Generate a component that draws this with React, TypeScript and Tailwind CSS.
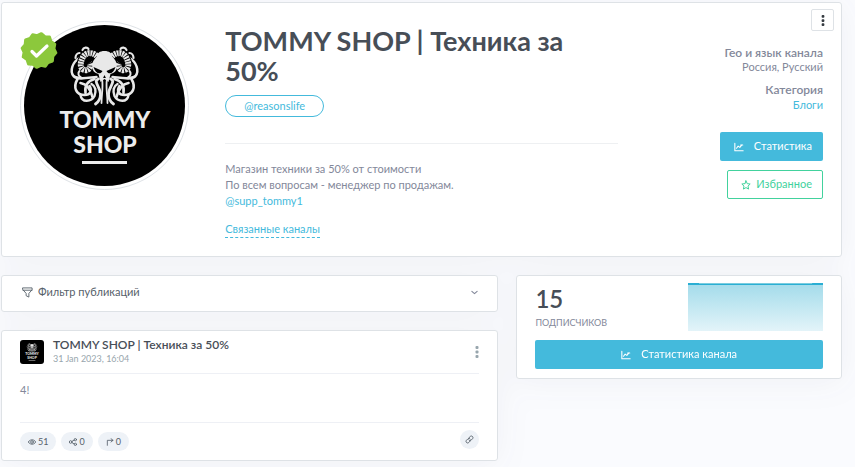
import type { ReactNode } from "react";

function OctopusHalf() {
  return (
    <g fill="none" stroke="#e8e8e8" strokeLinecap="round">
      <path d="M-25 -17 C-32 -13 -35 -4 -31 1 C-27 5 -18 3 -8 2" strokeWidth="2.5" />
      <path d="M-6 -17 C-10 -23 -19 -24 -22 -17 C-25 -11 -24 -6 -20 -5 C-15 -4 -13 -9 -15 -12" stroke="#000" strokeWidth="8" strokeLinecap="butt" />
      <path d="M-6 -17 C-10 -23 -19 -24 -22 -17 C-25 -11 -24 -6 -20 -5 C-15 -4 -13 -9 -15 -12" strokeWidth="6" strokeLinecap="butt" strokeDasharray="1.9 0.7" />
      <path d="M-22 -25 C-21 -28 -17 -28 -16 -26" strokeWidth="2.2" />
      <path d="M-29 -17 C-29 -20 -27 -22 -25 -22" strokeWidth="2.2" />
      <path d="M-25 -4 C-27 -2 -26 1 -24 2" strokeWidth="2" />
      <path d="M-10 4 C-17 6 -20 11 -19 18" strokeWidth="2.6" />
      <path d="M-24 8 C-18 9 -14 14 -12 22" strokeWidth="2.6" />
      <path d="M-27 4 C-32 13 -28 20 -20 20 C-14 20 -12 16 -15 11" strokeWidth="2.6" />
      <path d="M-24 20 C-23 28 -13 27 -10 21 C-8 16 -9 11 -13 9" strokeWidth="2.4" />
      <path d="M-6 4 C-12 6 -4 12 -4 19 C-4 24 -6 27 -9 29" strokeWidth="2.8" />
      <path d="M-2.500 4 C-1 12 -3 20 -3 28" strokeWidth="1.8" />
    </g>
  );
}

function ShopLogo({ className }: { className: string }) {
  return (
    <svg viewBox="0 0 161 161" className={className} role="img" aria-label="TOMMY SHOP">
      <rect width="161" height="161" fill="#000" />
      <g transform="translate(80.5 50)">
        <OctopusHalf />
        <g transform="scale(-1 1)">
          <OctopusHalf />
        </g>
        <path d="M0 -24 C5 -24 7 -22 8 -18 C11 -15 13 -12 12 -7 C12 -4 10 -2 6 -1 L4 7 L0 4 L-4 7 L-6 -1 C-10 -2 -12 -4 -12 -7 C-13 -12 -11 -15 -8 -18 C-7 -22 -5 -24 0 -24Z" fill="#e8e8e8" />
        <path d="M-11 -8 L-2 -4 C-4 0 -9 -1 -11 -8Z M11 -8 L2 -4 C4 0 9 -1 11 -8Z M0 0 L1.4 3 L-1.4 3Z" fill="#000" />
      </g>
      <g fill="#ececec" fontFamily="Lato, sans-serif" fontWeight="900" fontSize="23" textAnchor="middle">
        <text x="81" y="103">TOMMY</text>
        <text x="81" y="128">SHOP</text>
      </g>
      <rect x="58" y="136" width="45" height="3" fill="#ececec" />
    </svg>
  );
}

function VerifiedBadge() {
  const points = Array.from({ length: 24 }, (_, i) => {
    const r = i % 2 === 0 ? 17 : 15;
    const a = ((i * 15 - 82) * Math.PI) / 180;
    return `${(19 + r * Math.cos(a)).toFixed(2)},${(18.5 + r * Math.sin(a)).toFixed(2)}`;
  }).join(" ");
  return (
    <svg viewBox="0 0 38 37" className="absolute left-0 top-[11px] h-[37px] w-[38px]" role="img" aria-label="Verified">
      <polygon points={points} fill="#8cc83c" stroke="#8cc83c" strokeWidth="3" strokeLinejoin="round" />
      <path d="M12 19.500 L16.500 24 L27 14" fill="none" stroke="#fff" strokeWidth="3.200" strokeLinecap="round" strokeLinejoin="round" />
    </svg>
  );
}

function Icon({ className = "size-3", width = 2, children }: { className?: string; width?: number; children: ReactNode }) {
  return (
    <svg viewBox="0 0 24 24" className={className} fill="none" stroke="currentColor" strokeWidth={width} strokeLinecap="round" strokeLinejoin="round" aria-hidden="true">
      {children}
    </svg>
  );
}

function ChartIcon() {
  return (
    <Icon className="size-2.5" width={2.600}>
      <path d="M2 3v18h20M6 15l4-5 4 3 5-6M16 7h5" />
    </Icon>
  );
}

function Dots({ className }: { className: string }) {
  return (
    <svg viewBox="0 0 4 12" className={className} fill="currentColor" aria-hidden="true">
      <rect x="0.500" y="0" width="3" height="3" rx="1" />
      <rect x="0.500" y="4.500" width="3" height="3" rx="1" />
      <rect x="0.500" y="9" width="3" height="3" rx="1" />
    </svg>
  );
}

function Card({ className, children }: { className: string; children: ReactNode }) {
  return (
    <section className={`rounded-[3px] border border-[#dee2e6] bg-white ${className}`}>
      {children}
    </section>
  );
}

function Pill({ label, value, children }: { label: string; value: string; children: ReactNode }) {
  return (
    <span title={label} className="flex h-[19px] items-center gap-0.5 rounded-full bg-[#eef2f7] px-2 text-[9px] text-[#56606a]">
      {children}
      {value}
    </span>
  );
}

function ChannelHeader() {
  return (
    <Card className="relative grid grid-cols-12 gap-x-[18px] p-[18px]">
      <div className="relative col-span-3">
        <div className="size-[169px] rounded-full border border-[#dee2e6] bg-white p-[3px]">
          <ShopLogo className="size-full rounded-full" />
        </div>
        <VerifiedBadge />
      </div>

      <div className="col-span-6 pt-[5px]">
        <h1 className="text-[27px] font-bold leading-[30px] text-[#474e57]">TOMMY SHOP | Техника за 50%</h1>
        <a href="#channel" className="mt-[9px] inline-flex h-[22px] items-center rounded-full border border-[#44badc] px-[18px] text-[#44badc]">
          @reasonslife
        </a>
        <hr className="mt-[26px] border-[#eef0f2]" />
        <p className="mt-[17px] leading-4">
          Магазин техники за 50% от стоимости
          <br />
          По всем вопросам - менеджер по продажам.
          <br />
          <a href="#support" className="text-[#44badc]">@supp_tommy1</a>
        </p>
        <a href="#related" className="mt-3 inline-block border-b border-dashed border-[#44badc] leading-4 text-[#44badc]">
          Связанные каналы
        </a>
      </div>

      <div className="col-span-3 flex flex-col items-end pt-[25px] text-right">
        <h2 className="text-[12px] font-semibold leading-[14px]">Гео и язык канала</h2>
        <p className="leading-[14px]">Россия, Русский</p>
        <h2 className="mt-[9px] text-[12px] font-semibold leading-[14px]">Категория</h2>
        <a href="#blogs" className="leading-4 text-[#44badc]">Блоги</a>
        <a href="#stats" className="mt-[19px] flex h-[29px] items-center gap-2.5 rounded-[2px] bg-[#44badc] pl-[14px] pr-[11px] text-white">
          <ChartIcon />
          Статистика
        </a>
        <button type="button" className="mt-[9px] flex h-[29px] items-center gap-[5px] rounded-[2px] border border-[#42d29d] pl-[13px] pr-[10px] text-[#42d29d]">
          <Icon className="size-2.5" width={2.400}>
            <path d="M12 2l3 6.800 7 .8-5.200 5 1.400 7.200-6.200-3.600-6.200 3.600 1.400-7.200L2 9.600l7-.8z" />
          </Icon>
          Избранное
        </button>
      </div>

      <button type="button" aria-label="Меню канала" className="absolute right-[7px] top-1.5 flex h-[22px] w-[23px] items-center justify-center rounded-[2px] border border-[#dee2e6] bg-white text-[#343a40]">
        <Dots className="h-[11px] w-1" />
      </button>
    </Card>
  );
}

function PostFilter() {
  return (
    <Card className="text-[#56606a]">
      <button type="button" className="flex h-[35px] w-full items-center gap-[5px] pb-0.5 pl-5 pr-[18px]">
        <Icon className="size-[11px]">
          <path d="M2 2h20v4l-7 8v8l-6-3v-5L2 6zM2 7h20" />
        </Icon>
        Фильтр публикаций
        <Icon className="ml-auto size-[9px] text-[#83889a]" width={3}>
          <path d="M5 9l7 6 7-6" />
        </Icon>
      </button>
    </Card>
  );
}

function Post() {
  return (
    <Card className="px-[18px] pb-[9px] pt-[7px]">
      <header className="flex items-center border-b border-[#eef0f5] pb-[7px]">
        <ShopLogo className="size-6 rounded-[3px]" />
        <div className="ml-[9px]">
          <h3 className="text-[12px] font-semibold leading-[14px] text-[#474e57]">TOMMY SHOP | Техника за 50%</h3>
          <time className="block text-[9px] leading-[14px] text-[#98a6ad]">31 Jan 2023, 16:04</time>
        </div>
        <button type="button" aria-label="Меню публикации" className="ml-auto text-[#98a6ad]">
          <Dots className="h-3 w-1" />
        </button>
      </header>
      <p className="pb-6 pt-2 leading-4">4!</p>
      <footer className="flex items-start justify-between border-t border-[#eef0f5] pt-[7px]">
        <div className="flex gap-[5px] pt-0.5">
          <Pill label="Просмотры" value="51">
            <Icon className="size-2" width={2.500}>
              <path d="M1 12c4-9 18-9 22 0-4 9-18 9-22 0z" />
              <circle cx="12" cy="12" r="4" />
            </Icon>
          </Pill>
          <Pill label="Поделились" value="0">
            <Icon className="size-2" width={2.500}>
              <circle cx="5" cy="12" r="4" />
              <circle cx="19" cy="5" r="3.500" />
              <circle cx="19" cy="19" r="3.500" />
              <path d="M9 10l7-4M9 14l7 4" />
            </Icon>
          </Pill>
          <Pill label="Переслали" value="0">
            <Icon className="size-2" width={2.500}>
              <path d="M4 22V7h17M15 2l6 5-6 5" />
            </Icon>
          </Pill>
        </div>
        <a href="#post" aria-label="Ссылка" className="flex size-[19px] items-center justify-center rounded-full bg-[#eef2f7] text-[#56606a]">
          <Icon className="size-[9px]" width={2.500}>
            <path d="M10 8l4-4c4-4 10 2 6 6l-4 4c-2 2-5 1-6-1M14 16l-4 4c-4 4-10-2-6-6l4-4c2-2 5-1 6 1" />
          </Icon>
        </a>
      </footer>
    </Card>
  );
}

function Subscribers() {
  return (
    <Card className="px-[18px] pb-[9px] pt-[7px]">
      <div className="flex items-start justify-between">
        <div className="pt-1">
          <p className="text-2xl font-semibold leading-6 text-[#474e57]">15</p>
          <p className="mt-1 text-[9px] uppercase leading-4">Подписчиков</p>
        </div>
        <svg viewBox="0 0 135 48" preserveAspectRatio="none" className="h-12 w-[47%]" role="img" aria-label="График подписчиков">
          <defs>
            <linearGradient id="area" x1="0" y1="0" x2="0" y2="1">
              <stop offset="0" stopColor="#a2dbea" />
              <stop offset="1" stopColor="#e3f4f9" />
            </linearGradient>
          </defs>
          <rect width="135" height="48" fill="url(#area)" />
          <path d="M0 1H135" stroke="#2aaed3" strokeWidth="2" />
          <path d="M11 0.500H124" stroke="#7accdf" strokeWidth="1" />
        </svg>
      </div>
      <a href="#channel-stats" className="mt-[9px] flex h-[29px] items-center justify-center gap-2.5 rounded-[2px] bg-[#44badc] text-white">
        <ChartIcon />
        Статистика канала
      </a>
    </Card>
  );
}

export default function App() {
  return (
    <main className="min-h-screen overflow-hidden bg-[#fafbfe] pb-1.5 pl-px pr-[13px] pt-0.5 font-[Lato,'Noto_Sans',sans-serif] text-[11px] text-[#83889a]">
      <div className="drop-shadow-[0_3px_16px_rgba(56,65,74,0.05)]">
        <ChannelHeader />
        <div className="mt-[18px] grid grid-cols-5 items-start gap-x-[18px]">
          <div className="col-span-3 flex flex-col gap-[18px]">
            <PostFilter />
            <Post />
          </div>
          <div className="col-span-2">
            <Subscribers />
          </div>
        </div>
      </div>
    </main>
  );
}
